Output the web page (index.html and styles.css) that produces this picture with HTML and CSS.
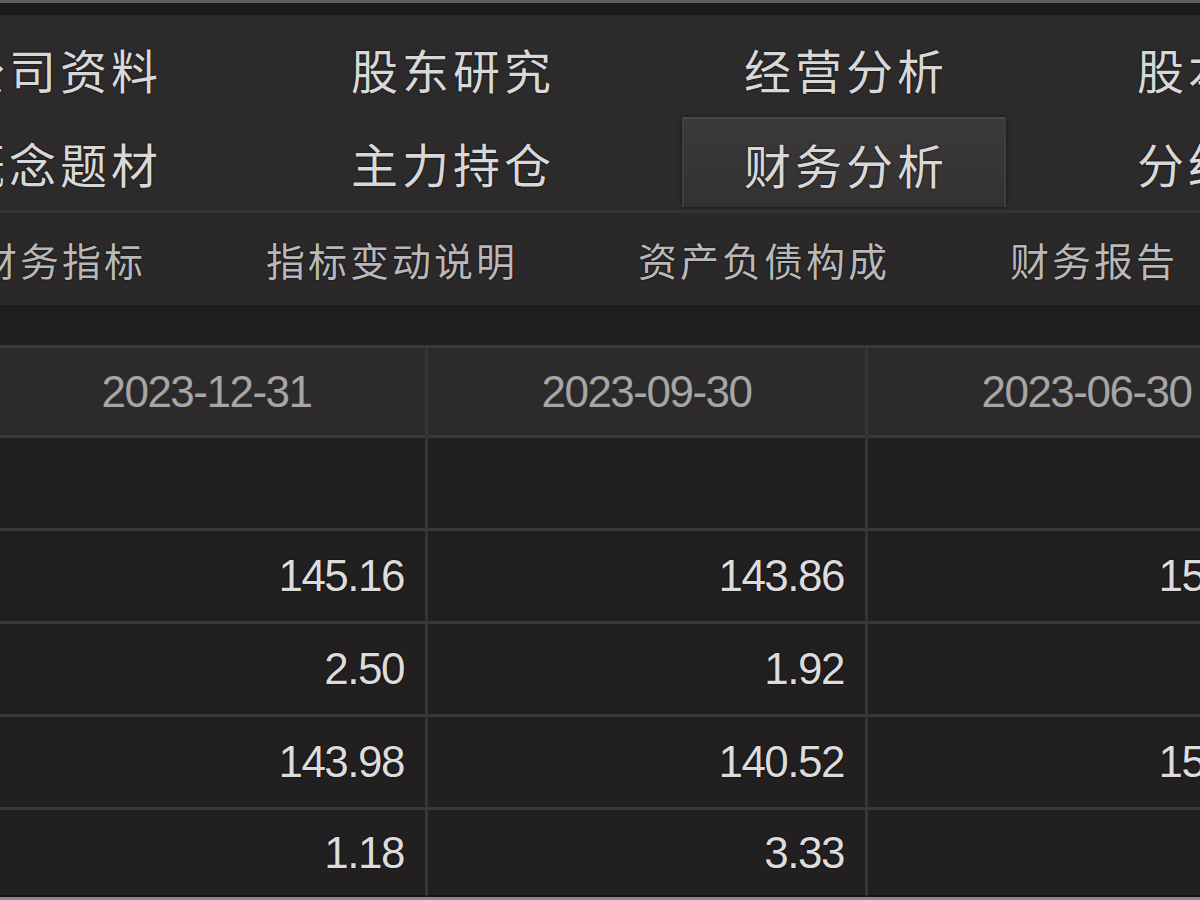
FILE: index.html
```html
<!DOCTYPE html>
<html lang="zh-CN">
<head>
  <meta charset="UTF-8" />
  <meta name="viewport" content="width=device-width, initial-scale=1.0"/>
  <title>财务分析</title>
  <link rel="stylesheet" href="styles.css">
</head>
<body>

  <div class="top-edge"></div>

  <nav class="tabs">
    <a class="tab">公司资料</a>
    <a class="tab">股东研究</a>
    <a class="tab">经营分析</a>
    <a class="tab">股本结构</a>
    <a class="tab">概念题材</a>
    <a class="tab">主力持仓</a>
    <a class="tab active">财务分析</a>
    <a class="tab">分红融资</a>
  </nav>

  <nav class="subnav">
    <a class="sub-item">财务指标</a>
    <a class="sub-item">指标变动说明</a>
    <a class="sub-item">资产负债构成</a>
    <a class="sub-item">财务报告</a>
  </nav>

  <div class="gap-band"></div>

  <table class="finance-table">
    <thead>
      <tr>
        <th>2023-12-31</th>
        <th>2023-09-30</th>
        <th>2023-06-30</th>
        <th>2023-03-31</th>
      </tr>
    </thead>
    <tbody>
      <tr>
        <td></td><td></td><td></td><td></td>
      </tr>
      <tr>
        <td>145.16</td><td>143.86</td><td>151.27</td><td>148.05</td>
      </tr>
      <tr>
        <td>2.50</td><td>1.92</td><td>1.64</td><td>0.87</td>
      </tr>
      <tr>
        <td>143.98</td><td>140.52</td><td>150.09</td><td>146.83</td>
      </tr>
      <tr class="last">
        <td>1.18</td><td>3.33</td><td>1.18</td><td>1.22</td>
      </tr>
    </tbody>
  </table>

  <div class="bottom-edge"></div>

</body>
</html>
```

FILE: styles.css
```css
:root {
  --panel: #2c2a2b;
  --panel-dark: #1f1d1e;
  --cell: #221f20;
  --head: #2c2a2b;
  --line: #3a3839;
  --tab-text: #d8d8d8;
  --sub-text: #b8b8b8;
  --head-text: #a6a6a6;
  --value-text: #dcdcdc;
}

* {
  box-sizing: border-box;
  margin: 0;
  padding: 0;
}

html, body {
  width: 1200px;
  height: 900px;
  overflow: hidden;
  background-color: var(--cell);
  font-family: "Noto Sans CJK SC", "Noto Sans", sans-serif;
}

.top-edge {
  height: 15px;
  border-top: 3px solid #5e5c5d;
  background-color: #1c1a1b;
}

/* main tabs, two rows of four */
.tabs {
  display: grid;
  grid-template-columns: repeat(4, 324px);
  grid-auto-rows: 90px;
  column-gap: 69px;
  row-gap: 4px;
  margin-left: -104px;
  width: 1600px;
  padding: 8px 0 3px;
  background-color: var(--panel);
  border-bottom: 3px solid #363435;
}

.tab {
  display: flex;
  align-items: center;
  justify-content: center;
  font-size: 47px;
  letter-spacing: 4px;
  padding-left: 4px;
  color: var(--tab-text);
  text-shadow: 0 0 2px #000;
  white-space: nowrap;
  cursor: pointer;
}

.tab.active {
  background: linear-gradient(#3b393a, #333132);
  border-top: 2px solid #474546;
  border-left: 2px solid #403e3f;
  border-right: 2px solid #3f3d3e;
  box-shadow: 0 0 4px rgba(0, 0, 0, 0.5);
}

/* second level links */
.subnav {
  display: flex;
  align-items: center;
  gap: 120px;
  height: 92px;
  margin-left: -22px;
  width: 1400px;
  background-color: #2a2829;
}

.sub-item {
  font-size: 39px;
  letter-spacing: 3px;
  color: var(--sub-text);
  text-shadow: 0 0 2px #000;
  white-space: nowrap;
  cursor: pointer;
}

.gap-band {
  height: 40px;
  background-color: var(--panel-dark);
}

/* report table */
.finance-table {
  table-layout: fixed;
  width: 1760px;
  margin-left: -12px;
  border-collapse: separate;
  border-spacing: 0;
  border-top: 3px solid var(--line);
  font-family: "Liberation Sans", Arial, sans-serif;
  font-size: 44px;
  letter-spacing: -1.5px;
}

.finance-table th,
.finance-table td {
  width: 440px;
  border-right: 3px solid #363435;
  border-bottom: 3px solid var(--line);
  white-space: nowrap;
}

.finance-table th {
  height: 90px;
  background-color: var(--head);
  color: var(--head-text);
  font-weight: normal;
  text-align: center;
}

.finance-table td {
  height: 93px;
  padding-right: 21px;
  background-color: var(--cell);
  color: var(--value-text);
  text-align: right;
  text-shadow: 0 0 2px #000;
}

.finance-table tr.last td {
  height: 87px;
  border-bottom: 2px solid #141213;
}

.bottom-edge {
  height: 3px;
  background-color: #8a8889;
}
```
